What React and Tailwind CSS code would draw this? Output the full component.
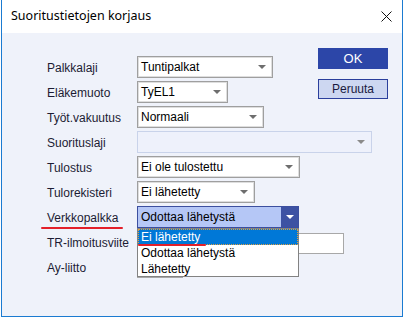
import React from "react";

const F = { fontFamily: '"Liberation Sans", Arial, sans-serif' };

function Arrow({ color = "border-t-[#6e6e6e]" }) {
  return (
    <span
      className={`inline-block w-0 h-0 border-l-[4px] border-r-[4px] border-t-[4px] border-l-transparent border-r-transparent ${color}`}
    />
  );
}

function Combo({ w, text }) {
  return (
    <div
      className={`${w} shrink-0 h-[22px] bg-white border border-[#9f9f9f] shadow-[inset_0_0_0_1px_#dedede] flex items-center justify-between pl-[3px] pr-[6px] text-[12px] text-black`}
    >
      <span>{text}</span>
      <Arrow />
    </div>
  );
}

function Row({ label, children, extra }) {
  return (
    <div className="relative flex items-center h-[22px]">
      <div className="w-[90px] shrink-0 text-[12px] text-[#1c1c34] pt-[1px]">{label}</div>
      {children}
      {extra}
    </div>
  );
}

export default function App() {
  return (
    <div className="w-[405px] h-[320px] bg-white pl-[1px]" style={F}>
      <div className="w-[402px] h-[317px] border-x border-b border-[#1b7bd1] flex flex-col bg-[#eff2fa]">
        <div className="h-[33px] bg-white flex items-center justify-between pl-[9px] pr-[9px] shrink-0">
          <span
            className="text-[12.5px] text-black"
            style={{ fontFamily: '"Noto Sans", "Open Sans", sans-serif' }}
          >
            Suoritustietojen korjaus
          </span>
          <svg width="11" height="11" viewBox="0 0 11 11" className="mr-[1px]">
            <path d="M0.5 0.5 L10.5 10.5 M10.5 0.5 L0.5 10.5" stroke="#111" strokeWidth="1" />
          </svg>
        </div>
        <div className="flex">
          <div className="w-[316px] shrink-0 pl-[45px] pt-[23px] flex flex-col gap-[3px]">
            <Row label="Palkkalaji">
              <Combo w="w-[136px]" text="Tuntipalkat" />
            </Row>
            <Row label="Eläkemuoto">
              <Combo w="w-[91px]" text="TyEL1" />
            </Row>
            <Row label="Työt.vakuutus">
              <Combo w="w-[127px]" text="Normaali" />
            </Row>
            <Row label="Suorituslaji">
              <div className="w-[235px] shrink-0 h-[22px] bg-[#eef1fb] border border-[#c9d3ea] flex items-center justify-end pr-[6px]">
                <Arrow color="border-t-[#8a8a8a]" />
              </div>
            </Row>
            <Row label="Tulostus">
              <Combo w="w-[163px]" text="Ei ole tulostettu" />
            </Row>
            <Row label="Tulorekisteri">
              <Combo w="w-[118px]" text="Ei lähetetty" />
            </Row>
            <Row
              label="Verkkopalkka"
              extra={
                <div className="absolute left-[-6px] top-[21px] w-[82px] h-[2px] bg-[#e3202a] rounded-full" />
              }
            >
              <div className="relative shrink-0 w-[162px] h-[22px] bg-[#b5c7f6] border border-[#3c4f9f] flex items-center justify-between pl-[3px] text-[12px] text-black">
                <span>Odottaa lähetystä</span>
                <div className="w-[17px] h-[20px] bg-[#3d52a3] flex items-center justify-center">
                  <Arrow color="border-t-white" />
                </div>
                <div className="absolute left-[-1px] top-[21px] w-[162px] border border-[#828282] bg-white z-10 flex flex-col">
                  <div className="relative h-[16px] bg-[#0078d7] text-white outline outline-1 outline-dotted outline-[#e0a040] -outline-offset-1 pl-[3px] flex items-center">
                    Ei lähetetty
                    <div className="absolute left-0 top-[15px] w-[68px] h-[2px] bg-[#e3202a] rounded-full" />
                  </div>
                  <div className="h-[16px] pl-[3px] flex items-center">Odottaa lähetystä</div>
                  <div className="h-[15px] pl-[3px] flex items-center">Lähetetty</div>
                </div>
              </div>
            </Row>
            <Row label="TR-ilmoitusviite">
              <div className="w-[207px] shrink-0 h-[21px] mt-[2px] bg-white border border-[#a8a8a8]" />
            </Row>
            <Row label="Ay-liitto">
              <div className="w-[46px] shrink-0 h-[22px] bg-white border border-[#a8a8a8]" />
            </Row>
          </div>
          <div className="pt-[15px] flex flex-col gap-[10px]">
            <div className="w-[70px] h-[21px] bg-[#2c46a8] text-white text-[13px] flex items-center justify-center">
              OK
            </div>
            <div className="w-[70px] h-[20px] bg-[#cdd7f1] border border-[#2b3f9c] text-[#1a1a40] text-[12px] flex items-center justify-center">
              Peruuta
            </div>
          </div>
        </div>
      </div>
    </div>
  );
}
